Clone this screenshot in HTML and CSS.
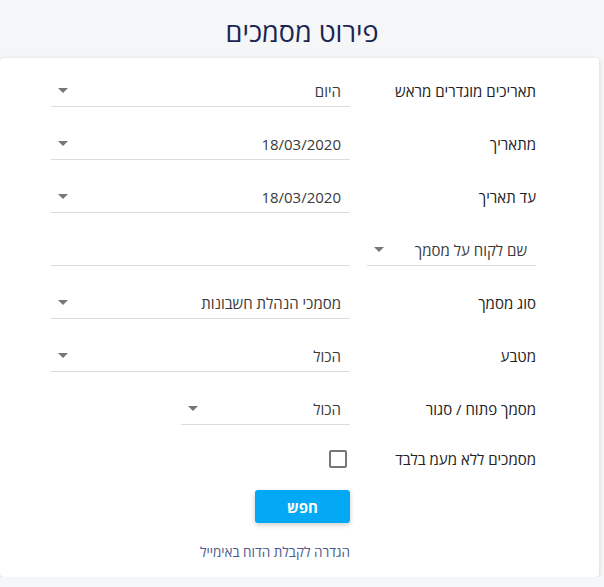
FILE: index.html
```html
<!DOCTYPE html>
<html lang="he" dir="rtl">
<head>
<meta charset="utf-8">
<title>פירוט מסמכים</title>
<link rel="stylesheet" href="styles.css">
</head>
<body>
<h1 class="page-title">פירוט מסמכים</h1>
<div class="card">
  <div class="row">
    <div class="label">תאריכים מוגדרים מראש</div>
    <div class="field"><span class="value">היום</span><span class="arrow"></span></div>
  </div>
  <div class="row">
    <div class="label">מתאריך</div>
    <div class="field"><span class="value">18/03/2020</span><span class="arrow"></span></div>
  </div>
  <div class="row">
    <div class="label">עד תאריך</div>
    <div class="field"><span class="value">18/03/2020</span><span class="arrow"></span></div>
  </div>
  <div class="row">
    <div class="label"><div class="field narrow"><span class="value">שם לקוח על מסמך</span><span class="arrow"></span></div></div>
    <div class="field"></div>
  </div>
  <div class="row">
    <div class="label">סוג מסמך</div>
    <div class="field"><span class="value">מסמכי הנהלת חשבונות</span><span class="arrow"></span></div>
  </div>
  <div class="row">
    <div class="label">מטבע</div>
    <div class="field"><span class="value">הכול</span><span class="arrow"></span></div>
  </div>
  <div class="row">
    <div class="label">מסמך פתוח / סגור</div>
    <div class="field narrow"><span class="value">הכול</span><span class="arrow"></span></div>
  </div>
  <div class="row check-row">
    <div class="label">מסמכים ללא מעמ בלבד</div>
    <div class="checkbox-wrap"><span class="checkbox"></span></div>
  </div>
  <div class="actions">
    <button class="btn" type="button">חפש</button>
    <a class="email-link" href="#">הגדרה לקבלת הדוח באימייל</a>
  </div>
</div>
</body>
</html>
```
FILE: styles.css
```css
body {
  margin: 0;
  background: #f5f6f8;
  font-family: "Open Sans", "Noto Sans", "Liberation Sans", sans-serif;
  direction: rtl;
}
.page-title {
  margin: 0;
  height: 58px;
  box-sizing: border-box;
  padding-top: 4px;
  display: flex;
  align-items: center;
  justify-content: center;
  font-size: 27px;
  font-weight: 400;
  color: #1b2552;
}
.card {
  margin-left: 0;
  margin-right: 5px;
  height: 519px;
  box-sizing: border-box;
  background: #fff;
  border-radius: 4px;
  box-shadow: 0 1px 4px rgba(0, 0, 0, 0.16);
  padding: 17px 63px 0 50px;
}
.row {
  display: flex;
  align-items: center;
  height: 32px;
  margin-bottom: 21px;
}
.label {
  width: 186px;
  flex: none;
  font-size: 15px;
  color: #222;
  display: flex;
}
.field {
  width: 299px;
  height: 32px;
  box-sizing: border-box;
  border-bottom: 1px solid #dcdcdc;
  display: flex;
  align-items: center;
  justify-content: space-between;
  padding: 0 9px 0 7px;
  font-size: 15px;
  color: #3a3a3a;
}
.field.narrow {
  width: 169px;
}
.arrow {
  width: 0;
  height: 0;
  border-left: 5px solid transparent;
  border-right: 5px solid transparent;
  border-top: 5px solid #777;
}
.check-row {
  height: 26px;
  margin-bottom: 18px;
}
.checkbox-wrap {
  padding-right: 3px;
  display: flex;
}
.checkbox {
  width: 18px;
  height: 18px;
  box-sizing: border-box;
  border: 2px solid #777;
  border-radius: 2px;
}
.actions {
  margin-right: 186px;
  display: flex;
  flex-direction: column;
  align-items: flex-start;
}
.btn {
  width: 95px;
  height: 33px;
  border: none;
  border-radius: 3px;
  background: #03a9f4;
  color: #fff;
  font-family: inherit;
  font-size: 15px;
  font-weight: 700;
  box-shadow: 0 2px 5px rgba(0, 0, 0, 0.2);
  padding: 0;
}
.email-link {
  margin-top: 19px;
  line-height: 20px;
  font-size: 13.5px;
  color: #4b5a8c;
  text-decoration: none;
}
```
